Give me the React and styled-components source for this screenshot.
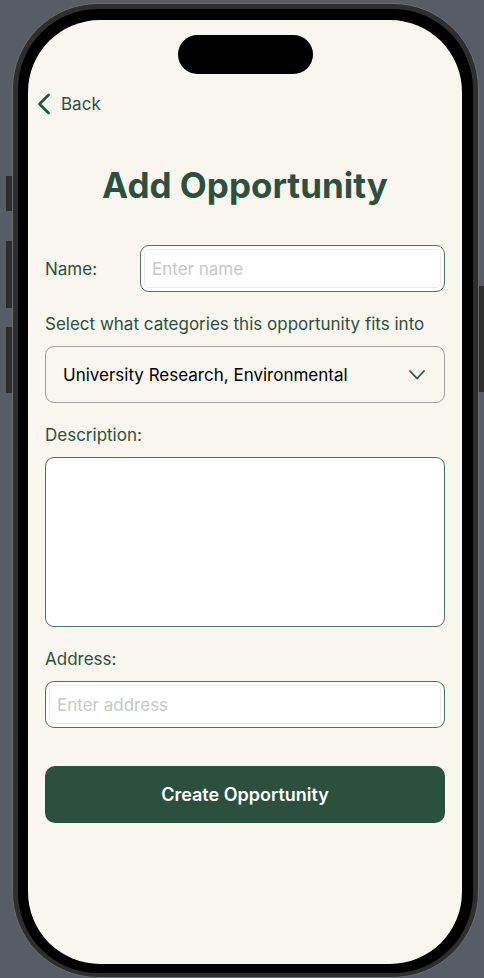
import React from "react";
import styled, { createGlobalStyle } from "styled-components";

const GlobalStyle = createGlobalStyle`
  *, *::before, *::after { box-sizing: border-box; }
  body {
    margin: 0;
    background: #575c65;
    font-family: Inter, "Liberation Sans", sans-serif;
  }
  button, input, select, textarea { font: inherit; margin: 0; }
`;

const green = "#2c503e";

const Desktop = styled.div`
  display: flex;
  min-height: 100vh;
  padding: 3px 5px 0 12px;
  overflow: hidden;
`;

const Phone = styled.div`
  position: relative;
  display: flex;
  flex: 1;
  border: 1px solid #6b6d6f;
  border-radius: 86px;
  background: #2e2e2e;
  padding: 5px 5px 4px;
`;

const SideButton = styled.span`
  position: absolute;
  top: ${(p) => p.$top}px;
  ${(p) => p.$side}: -7px;
  width: 6px;
  height: ${(p) => p.$length}px;
  background: #2d2d2d;
`;

const Bezel = styled.div`
  display: flex;
  flex: 1;
  background: #000;
  border-radius: 80px;
  padding: 11px 11px 9px 10px;
`;

const Screen = styled.main`
  display: flex;
  flex: 1;
  flex-direction: column;
  min-width: 0;
  background: #f9f6ef;
  border-radius: 72px;
`;

const Island = styled.div`
  align-self: center;
  width: 135px;
  height: 39px;
  margin-top: 15px;
  border-radius: 20px;
  background: #000;
`;

const BackButton = styled.button`
  display: flex;
  align-items: center;
  align-self: flex-start;
  gap: 10px;
  margin: 15px 0 0 9px;
  padding: 0;
  height: 30px;
  border: 0;
  background: none;
  color: ${green};
  font-size: 17px;
  cursor: pointer;
`;

const Title = styled.h1`
  margin: 44px 0 38px;
  color: ${green};
  font-size: 35px;
  font-weight: 700;
  line-height: 44px;
  text-align: center;
`;

const Form = styled.form`
  display: flex;
  flex-direction: column;
  padding: 0 17px;
`;

const NameRow = styled.div`
  display: grid;
  grid-template-columns: 95px minmax(0, 1fr);
  align-items: center;
  margin-bottom: 20px;
`;

const Label = styled.label`
  color: ${green};
  font-size: 17px;
  line-height: 24px;
  white-space: nowrap;
`;

const Group = styled.div`
  display: flex;
  flex-direction: column;
  gap: 10px;
  margin-bottom: ${(p) => p.$after}px;
`;

const FieldBox = styled.div`
  display: flex;
  height: 47px;
  padding: 3px;
  border: 1px solid #4a7562;
  border-radius: 9px;
  background: #fff;
`;

const TextField = styled.input`
  flex: 1;
  min-width: 0;
  padding: 0 7px;
  border: 1px solid #ececee;
  border-radius: 5px;
  background: #fff;
  color: #000;
  font-size: 17px;
  outline: none;
  &::placeholder { color: #c8c8ca; opacity: 1; }
`;

const SelectBox = styled.div`
  display: grid;
  align-items: center;
  height: 57px;
  border: 1px solid #a09fa1;
  border-radius: 9px;
`;

const Select = styled.select`
  grid-area: 1 / 1;
  width: 100%;
  height: 100%;
  padding: 0 44px 0 17px;
  border: 0;
  border-radius: 8px;
  appearance: none;
  background: transparent;
  color: #000;
  font-size: 17px;
  outline: none;
`;

const Chevron = styled.svg`
  grid-area: 1 / 1;
  justify-self: end;
  margin-right: 18px;
  pointer-events: none;
`;

const TextArea = styled.textarea`
  display: block;
  width: 100%;
  height: 170px;
  padding: 10px 12px;
  border: 1px solid #4a7562;
  border-radius: 9px;
  background: #fff;
  font-size: 17px;
  resize: none;
  outline: none;
`;

const SubmitButton = styled.button`
  height: 57px;
  border: 0;
  border-radius: 10px;
  background: ${green};
  color: #fff;
  font-size: 18px;
  font-weight: 600;
  cursor: pointer;
`;

export default function App() {
  return (
    <>
      <GlobalStyle />
      <Desktop>
        <Phone>
          <SideButton $side="left" $top={172} $length={35} />
          <SideButton $side="left" $top={237} $length={67} />
          <SideButton $side="left" $top={323} $length={66} />
          <SideButton $side="right" $top={282} $length={106} />
          <Bezel>
            <Screen>
              <Island />
              <BackButton type="button">
                <svg width="14" height="22" viewBox="0 0 14 22" fill="none" aria-hidden="true">
                  <path d="M11.5 2 2.5 11l9 9" stroke="#21583f" strokeWidth="2.8" strokeLinecap="round" strokeLinejoin="round" />
                </svg>
                Back
              </BackButton>
              <Title>Add Opportunity</Title>
              <Form onSubmit={(e) => e.preventDefault()}>
                <NameRow>
                  <Label htmlFor="name">Name:</Label>
                  <FieldBox>
                    <TextField id="name" type="text" placeholder="Enter name" />
                  </FieldBox>
                </NameRow>
                <Group $after={20}>
                  <Label htmlFor="categories">Select what categories this opportunity fits into</Label>
                  <SelectBox>
                    <Select id="categories">
                      <option>University Research, Environmental</option>
                    </Select>
                    <Chevron width="18" height="12" viewBox="0 0 18 12" fill="none" aria-hidden="true">
                      <path d="m2 2 7 7.5L16 2" stroke="#21583f" strokeWidth="1.8" strokeLinecap="round" strokeLinejoin="round" />
                    </Chevron>
                  </SelectBox>
                </Group>
                <Group $after={20}>
                  <Label htmlFor="description">Description:</Label>
                  <TextArea id="description" />
                </Group>
                <Group $after={38}>
                  <Label htmlFor="address">Address:</Label>
                  <FieldBox>
                    <TextField id="address" type="text" placeholder="Enter address" />
                  </FieldBox>
                </Group>
                <SubmitButton type="submit">Create Opportunity</SubmitButton>
              </Form>
            </Screen>
          </Bezel>
        </Phone>
      </Desktop>
    </>
  );
}
